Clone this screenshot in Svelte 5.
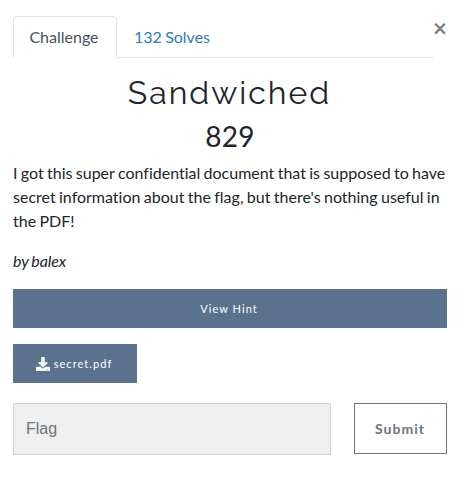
<script>
  let flag = $state('');
</script>

<main class="challenge">
  <div class="top">
    <nav class="tabs">
      <button class="tab active">Challenge</button>
      <button class="tab">132 Solves</button>
    </nav>
    <button class="close" aria-label="Close">×</button>
  </div>

  <h2>Sandwiched</h2>
  <h3>829</h3>

  <p>I got this super confidential document that is supposed to have secret information about the flag, but there's nothing useful in the PDF!</p>
  <p class="author"><em>by balex</em></p>

  <button class="btn hint">View Hint</button>
  <button class="btn file">
    <svg viewBox="0 0 512 512" aria-hidden="true">
      <path fill="currentColor" d="M216 0h80c13.3 0 24 10.7 24 24v168h87.7c17.8 0 26.7 21.5 14.1 34.1L269.7 378.3c-7.5 7.5-19.8 7.5-27.3 0L90.1 226.1c-12.6-12.6-3.7-34.1 14.1-34.1H192V24c0-13.3 10.7-24 24-24zm296 376v112c0 13.3-10.7 24-24 24H24c-13.3 0-24-10.7-24-24V376c0-13.3 10.7-24 24-24h146.7l49 49c20.1 20.1 52.5 20.1 72.6 0l49-49H488c13.3 0 24 10.7 24 24zm-124 88c0-11-9-20-20-20s-20 9-20 20 9 20 20 20 20-9 20-20zm64 0c0-11-9-20-20-20s-20 9-20 20 9 20 20 20 20-9 20-20z" />
    </svg>
    <span>secret.pdf</span>
  </button>

  <div class="submit-row">
    <input type="text" placeholder="Flag" bind:value={flag} />
    <button class="submit">Submit</button>
  </div>
</main>

<style>
  :global(body) {
    margin: 0;
    background: #fff;
  }
  .challenge, .challenge * {
    box-sizing: border-box;
  }
  .challenge {
    width: 471px;
    height: 485px;
    padding: 16px 24px 0 13px;
    display: flex;
    flex-direction: column;
    align-items: stretch;
    font: 400 16px/24px Lato, "Liberation Sans", sans-serif;
    color: #212529;
    overflow: hidden;
  }
  button {
    margin: 0;
    font-family: inherit;
    cursor: pointer;
  }
  .top {
    display: flex;
    align-items: flex-start;
    height: 42px;
    flex: none;
  }
  .tabs {
    display: flex;
    width: 420px;
    height: 42px;
    flex: none;
    border-bottom: 1px solid #dee2e6;
  }
  .tab {
    height: 42px;
    padding: 0 16px;
    background: none;
    border: 1px solid transparent;
    border-radius: 4px 4px 0 0;
    font-size: 16px;
    line-height: 24px;
    color: #337ab7;
    white-space: nowrap;
    word-spacing: -0.8px;
  }
  .tab.active {
    width: 104px;
    padding: 0 16px 0 14px;
    background: #fff;
    border-color: #dee2e6 #dee2e6 #fff;
    color: #495057;
  }
  .close {
    flex: none;
    width: 12px;
    height: 24px;
    padding: 0;
    border: 0;
    background: none;
    color: #7f7f7f;
    font-size: 24px;
    font-weight: 700;
    line-height: 24px;
  }
  h2 {
    margin: 16px 0 8px;
    padding-right: 1px;
    text-align: center;
    font: 400 32px/38px Raleway, Lato, sans-serif;
    letter-spacing: 2px;
  }
  h3 {
    margin: 0 0 8px;
    text-align: center;
    font-size: 28px;
    font-weight: 400;
    line-height: 33px;
    letter-spacing: 0.3px;
  }
  p {
    margin: 0 0 16px;
    flex: none;
    word-spacing: -0.75px;
    font-variant-ligatures: none;
  }
  .author {
    letter-spacing: -0.1px;
  }
  .btn {
    height: 39px;
    flex: none;
    display: flex;
    align-items: center;
    justify-content: center;
    padding: 0 2px 0 0;
    border: 0;
    background: #5b728f;
    color: #fff;
    font-size: 11px;
    line-height: 16px;
    letter-spacing: 1.05px;
  }
  .file {
    width: 124px;
    margin-top: 16px;
    gap: 4px;
  }
  .file svg {
    width: 14px;
    height: 14px;
  }
  .submit-row {
    display: flex;
    justify-content: space-between;
    align-items: flex-start;
    margin-top: 20px;
  }
  input {
    width: 318px;
    height: 52px;
    padding: 0 12px;
    border: 1px solid #ced4da;
    border-radius: 0;
    background: #efefef;
    font: 16px/24px "Liberation Sans", Arial, sans-serif;
    color: #495057;
    outline: none;
  }
  input::placeholder {
    color: #6c757d;
    opacity: 1;
  }
  .submit {
    width: 93px;
    height: 51px;
    padding: 0 1px 0 0;
    border: 1px solid #6c757d;
    background: #fff;
    color: #6c757d;
    font-size: 14px;
    font-weight: 700;
    letter-spacing: 1px;
  }
</style>
